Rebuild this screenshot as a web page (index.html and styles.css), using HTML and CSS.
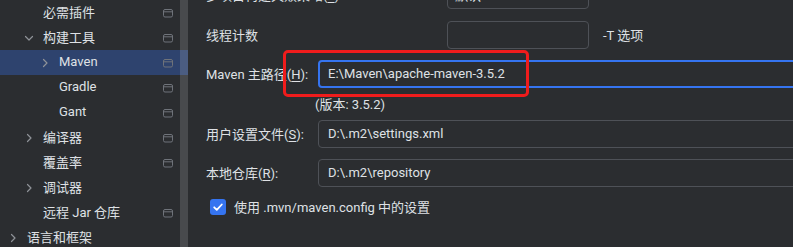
FILE: index.html
```html
<!DOCTYPE html>
<html lang="zh-CN">
<head>
    <meta charset="UTF-8">
    <meta name="viewport" content="width=device-width, initial-scale=1.0">
    <title>Maven 设置</title>
    <link rel="stylesheet" href="styles.css">
</head>
<body>
<div class="window">
    <aside class="sidebar">
        <div class="tree-row lvl2">
            <span class="chev"></span>
            <span class="label">必需插件</span>
            <svg class="page-icon" viewBox="0 0 16 16"><rect x="3.5" y="4.5" width="9" height="7.5" rx="1.5"/><line x1="3.5" y1="6.8" x2="12.5" y2="6.8"/></svg>
        </div>
        <div class="tree-row lvl2">
            <svg class="chev" viewBox="0 0 16 16"><path d="M4.5 6.5l3.5 3.5 3.5-3.5"/></svg>
            <span class="label">构建工具</span>
            <svg class="page-icon" viewBox="0 0 16 16"><rect x="3.5" y="4.5" width="9" height="7.5" rx="1.5"/><line x1="3.5" y1="6.8" x2="12.5" y2="6.8"/></svg>
        </div>
        <div class="tree-row lvl3 selected">
            <svg class="chev" viewBox="0 0 16 16"><path d="M6.5 4.5l3.5 3.5-3.5 3.5"/></svg>
            <span class="label">Maven</span>
            <svg class="page-icon" viewBox="0 0 16 16"><rect x="3.5" y="4.5" width="9" height="7.5" rx="1.5"/><line x1="3.5" y1="6.8" x2="12.5" y2="6.8"/></svg>
        </div>
        <div class="tree-row lvl3">
            <span class="chev"></span>
            <span class="label">Gradle</span>
            <svg class="page-icon" viewBox="0 0 16 16"><rect x="3.5" y="4.5" width="9" height="7.5" rx="1.5"/><line x1="3.5" y1="6.8" x2="12.5" y2="6.8"/></svg>
        </div>
        <div class="tree-row lvl3">
            <span class="chev"></span>
            <span class="label">Gant</span>
            <svg class="page-icon" viewBox="0 0 16 16"><rect x="3.5" y="4.5" width="9" height="7.5" rx="1.5"/><line x1="3.5" y1="6.8" x2="12.5" y2="6.8"/></svg>
        </div>
        <div class="tree-row lvl2">
            <svg class="chev" viewBox="0 0 16 16"><path d="M6.5 4.5l3.5 3.5-3.5 3.5"/></svg>
            <span class="label">编译器</span>
            <svg class="page-icon" viewBox="0 0 16 16"><rect x="3.5" y="4.5" width="9" height="7.5" rx="1.5"/><line x1="3.5" y1="6.8" x2="12.5" y2="6.8"/></svg>
        </div>
        <div class="tree-row lvl2">
            <span class="chev"></span>
            <span class="label">覆盖率</span>
            <svg class="page-icon" viewBox="0 0 16 16"><rect x="3.5" y="4.5" width="9" height="7.5" rx="1.5"/><line x1="3.5" y1="6.8" x2="12.5" y2="6.8"/></svg>
        </div>
        <div class="tree-row lvl2">
            <svg class="chev" viewBox="0 0 16 16"><path d="M6.5 4.5l3.5 3.5-3.5 3.5"/></svg>
            <span class="label">调试器</span>
        </div>
        <div class="tree-row lvl2">
            <span class="chev"></span>
            <span class="label">远程 Jar 仓库</span>
            <svg class="page-icon" viewBox="0 0 16 16"><rect x="3.5" y="4.5" width="9" height="7.5" rx="1.5"/><line x1="3.5" y1="6.8" x2="12.5" y2="6.8"/></svg>
        </div>
        <div class="tree-row lvl1">
            <svg class="chev" viewBox="0 0 16 16"><path d="M6.5 4.5l3.5 3.5-3.5 3.5"/></svg>
            <span class="label">语言和框架</span>
        </div>
        <div class="scrollbar"></div>
    </aside>

    <main class="settings">
        <div class="form-row row-top">
            <span class="thread-label">多项目构建失败策略(<u>F</u>):</span>
            <div class="field short">默认</div>
        </div>
        <div class="form-row row-thread">
            <span class="thread-label">线程计数</span>
            <div class="field short"></div>
            <span class="hint">-T 选项</span>
        </div>
        <div class="form-row row-home">
            <span class="path-label">Maven 主路径(<u>H</u>):</span>
            <div class="field wide focused">E:\Maven\apache-maven-3.5.2</div>
        </div>
        <div class="version">(版本: 3.5.2)</div>
        <div class="form-row row-settings">
            <span class="path-label">用户设置文件(<u>S</u>):</span>
            <div class="field wide">D:\.m2\settings.xml</div>
        </div>
        <div class="form-row row-repo">
            <span class="path-label">本地仓库(<u>R</u>):</span>
            <div class="field wide">D:\.m2\repository</div>
        </div>
        <div class="check-row">
            <span class="checkbox"><svg viewBox="0 0 16 16"><path d="M4.2 8.3l2.6 2.6 5-5.4"/></svg></span>
            <span>使用 .mvn/maven.config 中的设置</span>
        </div>

        <!-- annotation box around the Maven home field -->
        <div class="highlight"></div>
    </main>
</div>
</body>
</html>
```

FILE: styles.css
```css
body {
    margin: 0;
    background-color: #2b2d30;
    color: #dfe1e5;
    font-family: Roboto, "Noto Sans CJK SC", sans-serif;
    font-size: 13px;
    overflow: hidden;
}
u {
    text-underline-offset: 2px;
}
.window {
    display: flex;
    height: 247px;
}
.sidebar {
    position: relative;
    width: 188px;
    flex: none;
}
.tree-row {
    display: flex;
    align-items: center;
    height: 25px;
    padding-right: 12px;
    white-space: nowrap;
}
.tree-row.selected {
    background-color: #2e436e;
}
.lvl1 {
    padding-left: 5px;
}
.lvl2 {
    padding-left: 21px;
}
.lvl3 {
    padding-left: 37px;
}
.chev {
    width: 16px;
    height: 16px;
    flex: none;
    margin-right: 6px;
    fill: none;
    stroke: #8f9298;
    stroke-width: 1.2;
    stroke-linecap: round;
    stroke-linejoin: round;
}
.label {
    flex: 1;
    padding-bottom: 2px;
}
.page-icon {
    width: 16px;
    height: 16px;
    flex: none;
    fill: none;
    stroke: #6f737a;
    stroke-width: 1;
}
.scrollbar {
    position: absolute;
    top: 0;
    bottom: 0;
    left: 180px;
    width: 8px;
    background-color: rgba(255, 255, 255, 0.14);
}
.settings {
    position: relative;
    flex: 1;
    min-width: 0;
    padding-left: 18px;
}
.form-row {
    display: flex;
    align-items: center;
    height: 28px;
    white-space: nowrap;
}
.row-top {
    margin-top: -19px;
}
.row-thread {
    margin-top: 12px;
}
.row-home {
    margin-top: 11px;
}
.row-settings {
    margin-top: 7px;
}
.row-repo {
    margin-top: 11px;
}
.thread-label {
    width: 241px;
    flex: none;
    padding-bottom: 2px;
}
.path-label {
    width: 112px;
    flex: none;
    padding-bottom: 2px;
}
.field {
    box-sizing: border-box;
    display: flex;
    align-items: center;
    height: 28px;
    padding: 0 9px 1px;
    border: 1px solid #4e5157;
    border-radius: 4px;
    flex: none;
}
.field.short {
    width: 142px;
    padding-left: 7px;
}
.field.wide {
    width: 540px;
}
.field.focused {
    border: 2px solid #3574f0;
    padding-left: 8px;
}
.hint {
    margin-left: 14px;
    padding-bottom: 2px;
}
.version {
    margin-top: 9px;
    padding-left: 109px;
    line-height: 16px;
}
.check-row {
    display: flex;
    align-items: center;
    height: 16px;
    margin-top: 12px;
    padding-left: 4px;
    white-space: nowrap;
}
.check-row span:last-child {
    padding-bottom: 2px;
}
.checkbox {
    width: 16px;
    height: 16px;
    border-radius: 3px;
    background-color: #3574f0;
    margin-right: 8px;
    flex: none;
}
.checkbox svg {
    display: block;
    width: 16px;
    height: 16px;
    fill: none;
    stroke: #ffffff;
    stroke-width: 1.8;
    stroke-linecap: round;
    stroke-linejoin: round;
}
.highlight {
    position: absolute;
    left: 95px;
    top: 50px;
    width: 246px;
    height: 47px;
    box-sizing: border-box;
    border: 3px solid #f01c1c;
    border-radius: 5px;
}
```
